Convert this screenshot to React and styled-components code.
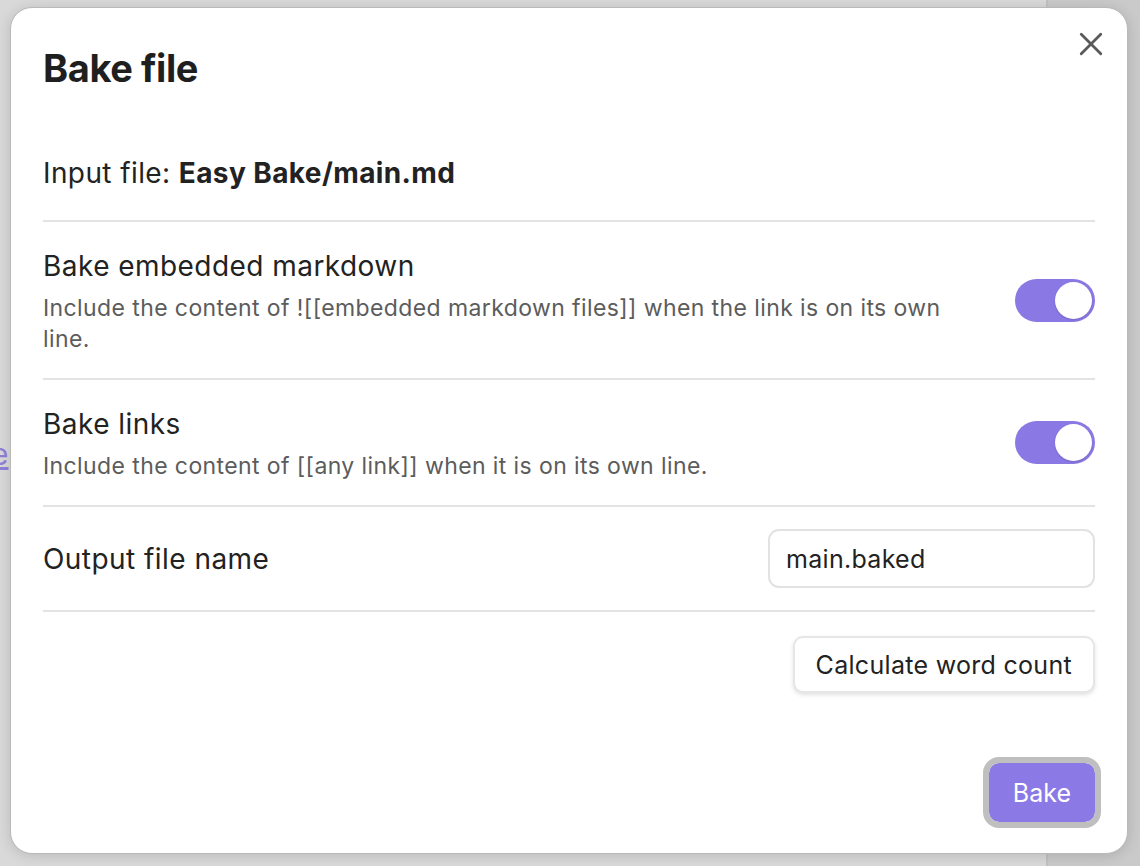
import React, { useState } from "react";
import styled, { createGlobalStyle } from "styled-components";

const GlobalStyle = createGlobalStyle`
  html, body {
    margin: 0;
    padding: 0;
    width: 100%;
    height: 100%;
    overflow: hidden;
  }
  body {
    font-family: Inter, "Noto Sans", "Liberation Sans", sans-serif;
    color: #222222;
    background: #d4d4d4;
  }
`;

// the app sitting behind the dialog, dimmed
const AppBehind = styled.div`
  position: fixed;
  inset: 0;
  display: grid;
  grid-template-columns: 1048px 1fr;
  background: #d6d6d6;
`;

const Pane = styled.div`
  position: relative;
  overflow: hidden;
  border-right: ${(p) => (p.divided ? "2px solid #c2c2c2" : "none")};
  background: ${(p) => p.bg};
`;

const PeekLink = styled.span`
  position: absolute;
  top: 436px;
  left: -9px;
  font-size: 30px;
  color: #8f80d8;
  text-decoration: underline;
`;

const Backdrop = styled.div`
  position: fixed;
  inset: 0;
  padding: 7px 12px 12px 10px;
  box-sizing: border-box;
  display: flex;
`;

const Modal = styled.div`
  position: relative;
  flex: 1;
  background: #ffffff;
  border: 1px solid #b9b9b9;
  border-radius: 22px;
  box-shadow: 0 2px 14px rgba(0, 0, 0, 0.14);
  padding: 40px 32px 32px 32px;
  box-sizing: border-box;
  display: flex;
  flex-direction: column;
`;

const CloseButton = styled.button`
  position: absolute;
  top: 20px;
  right: 20px;
  width: 32px;
  height: 32px;
  padding: 0;
  border: none;
  background: transparent;
  display: flex;
  align-items: center;
  justify-content: center;
  cursor: pointer;
`;

const Title = styled.h1`
  margin: 0;
  font-size: 38px;
  font-weight: 700;
  letter-spacing: -0.4px;
  line-height: 40px;
  color: #1f1f1f;
`;

const InputLine = styled.p`
  margin: 68px 0 0 0;
  font-size: 28px;
  line-height: 34px;
  padding-bottom: 30px;
  border-bottom: 2px solid #e3e3e3;
  letter-spacing: 0.4px;
  b {
    font-weight: 700;
  }
`;

const SettingRow = styled.div`
  display: flex;
  align-items: center;
  gap: 56px;
  padding: ${(p) => p.pad || "28px 0 23px"};
  border-bottom: 2px solid #e3e3e3;
`;

const SettingInfo = styled.div`
  flex: 1;
  display: flex;
  flex-direction: column;
  gap: 11px;
`;

const SettingName = styled.div`
  font-size: 28px;
  line-height: 32px;
  color: #222222;
  letter-spacing: 0.45px;
`;

const SettingDesc = styled.div`
  font-size: 23px;
  line-height: 31px;
  color: #5c5c5c;
  letter-spacing: 0.4px;
`;

const Track = styled.button`
  flex: none;
  width: 80px;
  height: 43px;
  margin-top: -5px;
  border: none;
  border-radius: 22px;
  padding: 3px;
  box-sizing: border-box;
  background: ${(p) => (p.on ? "#8a78e4" : "#d0d0d0")};
  display: flex;
  justify-content: ${(p) => (p.on ? "flex-end" : "flex-start")};
  cursor: pointer;
`;

const Knob = styled.span`
  width: 37px;
  height: 37px;
  border-radius: 50%;
  background: #ffffff;
  box-shadow: 0 1px 2px rgba(0, 0, 0, 0.15);
`;

const TextInput = styled.input`
  flex: none;
  width: 327px;
  height: 59px;
  box-sizing: border-box;
  border: 2px solid #e2e2e2;
  border-radius: 11px;
  padding: 0 16px;
  font-family: inherit;
  font-size: 25px;
  letter-spacing: 0.3px;
  color: #222222;
  outline: none;
`;

const Actions = styled.div`
  display: flex;
  justify-content: flex-end;
  padding-top: ${(p) => p.top || 0}px;
`;

const PlainButton = styled.button`
  height: 57px;
  padding: 0 21px;
  border: 2px solid #e6e6e6;
  border-radius: 10px;
  background: #ffffff;
  box-shadow: 0 2px 4px rgba(0, 0, 0, 0.12);
  font-family: inherit;
  font-size: 25px;
  letter-spacing: 0.3px;
  color: #222222;
  cursor: pointer;
`;

const PrimaryButton = styled.button`
  height: 71px;
  padding: 0 24px;
  border: 6px solid #bfbfbf;
  border-radius: 16px;
  background: #8b79e6;
  background-clip: padding-box;
  font-family: inherit;
  font-size: 25px;
  color: #ffffff;
  cursor: pointer;
  margin-right: -6px;
`;

const Toggle = ({ on, onChange }) => (
  <Track on={on} onClick={() => onChange(!on)}>
    <Knob />
  </Track>
);

export default function App() {
  const [embeds, setEmbeds] = useState(true);
  const [links, setLinks] = useState(true);
  const [name, setName] = useState("main.baked");

  return (
    <>
      <GlobalStyle />
      <AppBehind>
        <Pane divided bg="#d9d9d9">
          <PeekLink>e</PeekLink>
        </Pane>
        <Pane bg="#cacaca" />
      </AppBehind>
      <Backdrop>
        <Modal>
          <CloseButton aria-label="Close">
            <svg width="26" height="26" viewBox="0 0 24 24" fill="none" stroke="#5a5a5a" strokeWidth="2.6" strokeLinecap="round">
              <path d="M3 3 L21 21 M21 3 L3 21" />
            </svg>
          </CloseButton>
          <Title>Bake file</Title>
          <InputLine>
            Input file: <b>Easy Bake/main.md</b>
          </InputLine>
          <SettingRow>
            <SettingInfo>
              <SettingName>Bake embedded markdown</SettingName>
              <SettingDesc>
                Include the content of ![[embedded markdown files]] when the link is on its own line.
              </SettingDesc>
            </SettingInfo>
            <Toggle on={embeds} onChange={setEmbeds} />
          </SettingRow>
          <SettingRow>
            <SettingInfo>
              <SettingName>Bake links</SettingName>
              <SettingDesc>Include the content of [[any link]] when it is on its own line.</SettingDesc>
            </SettingInfo>
            <Toggle on={links} onChange={setLinks} />
          </SettingRow>
          <SettingRow pad="22px 0">
            <SettingInfo>
              <SettingName>Output file name</SettingName>
            </SettingInfo>
            <TextInput value={name} onChange={(e) => setName(e.target.value)} />
          </SettingRow>
          <Actions top={24}>
            <PlainButton>Calculate word count</PlainButton>
          </Actions>
          <Actions top={64}>
            <PrimaryButton>Bake</PrimaryButton>
          </Actions>
        </Modal>
      </Backdrop>
    </>
  );
}
